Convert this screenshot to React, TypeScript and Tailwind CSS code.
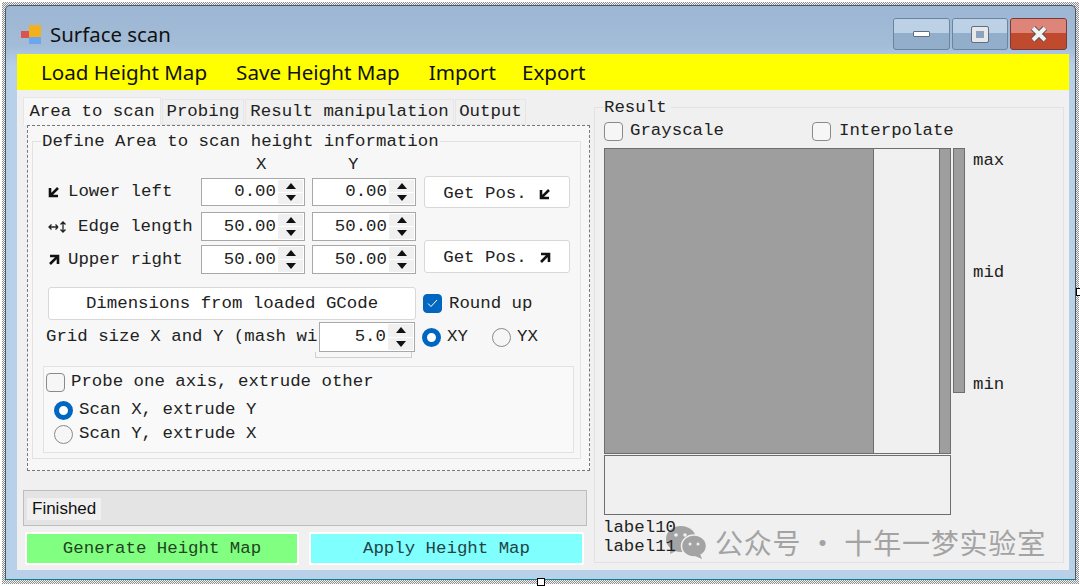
import React from 'react';

const mono = "font-['Liberation_Mono','Noto_Sans_CJK_SC',monospace] text-[17.4px] leading-5 text-[#222] whitespace-nowrap";

const Arrow = ({ dir }: { dir: 'll' | 'ur' }) => (
  <svg width="12" height="12" viewBox="0 0 12 12" className={dir === 'ur' ? 'rotate-180' : ''}>
    <path d="M2 2v8h8M2.8 9.2L10 2" fill="none" stroke="#111" strokeWidth="2.6" />
  </svg>
);

const Spinner = ({ value, height = 'h-7' }: { value: string; height?: string }) => (
  <div className={`flex w-[104px] ${height} items-center border border-[#a8a8a8] bg-white`}>
    <span className={`${mono} flex-1 pr-[2px] text-right`}>{value}</span>
    <div className="mr-px flex h-full w-[25px] flex-col gap-px bg-white py-px">
      <div className="flex flex-1 items-center justify-center bg-[#f0f0f0]">
        <div className="h-0 w-0 border-x-[5px] border-b-[6px] border-x-transparent border-b-[#111]" />
      </div>
      <div className="flex flex-1 items-center justify-center bg-[#f0f0f0]">
        <div className="h-0 w-0 border-x-[5px] border-t-[6px] border-x-transparent border-t-[#111]" />
      </div>
    </div>
  </div>
);

const Check = ({ checked = false, className = '' }: { checked?: boolean; className?: string }) => (
  <div className={`flex h-[19px] w-[19px] shrink-0 items-center justify-center rounded-[4px] border ${checked ? 'border-[#0067c0] bg-[#0067c0]' : 'border-[#8a8a8a] bg-[#f6f6f6]'} ${className}`}>
    {checked && (
      <svg width="11" height="9" viewBox="0 0 11 9">
        <path d="M1 4.5L4 7.5L10 1" fill="none" stroke="#fff" strokeWidth="1" />
      </svg>
    )}
  </div>
);

const Radio = ({ checked = false }: { checked?: boolean }) =>
  checked ? (
    <div className="h-[19px] w-[19px] shrink-0 rounded-full border-[5px] border-[#0067c0] bg-white" />
  ) : (
    <div className="h-[19px] w-[19px] shrink-0 rounded-full border border-[#8a8a8a] bg-[#f6f6f6]" />
  );

const CoordRow = ({ icon, label, labelGap, height, x, y, className = '' }: { icon: React.ReactNode; label: string; labelGap: string; height: string; x: string; y: string; className?: string }) => (
  <div className={`flex items-center ${className}`}>
    <div className={`flex w-[168px] items-center ${labelGap} pl-[15px]`}>
      {icon}
      <span className={mono}>{label}</span>
    </div>
    <div className="flex gap-[7px]">
      <Spinner value={x} height={height} />
      <Spinner value={y} height={height} />
    </div>
  </div>
);

const GetPos = ({ dir, height }: { dir: 'll' | 'ur'; height: string }) => (
  <button className={`flex w-[146px] ${height} items-center justify-center gap-3 rounded-[3px] border border-[#d8d8d8] bg-white pt-[3px] ${mono}`}>
    Get Pos. <Arrow dir={dir} />
  </button>
);

const WinButton = ({ children, red = false, width = 'w-[57px]' }: { children: React.ReactNode; red?: boolean; width?: string }) => (
  <div className={`relative flex h-[32px] ${width} items-center justify-center overflow-hidden rounded-[3px] border ${red ? 'border-[#7a3a38] bg-[#bf4a2e]' : 'border-[#6d84a0] bg-[#93aecb]'}`}>
    <div className={`absolute inset-x-0 top-0 h-[14px] ${red ? 'bg-[#dd8579]' : 'bg-[#bcd0e6]'}`} />
    <div className="relative">{children}</div>
  </div>
);

export default function App() {
  return (
    <div className="relative h-[586px] w-[1080px] overflow-hidden bg-white pl-[2px] pr-[1px] pt-[2px] pb-[2px]">
      {/* designer hatch around the form */}
      <div className="h-full w-full bg-[repeating-conic-gradient(#8f8f8f_0_25%,#f4f4f4_0_50%)] bg-[length:2px_2px] pb-[4px] pl-[3px] pr-[3px] pt-[3px]">
        <div className="flex h-full w-full flex-col rounded-t-[5px] border border-[#4a5a60] border-b-[#0f7f8f] bg-[linear-gradient(#9cb6d3,#a3bcd8_40px,#b9d0e9_60px)] pb-[9px] pl-[11px] pr-[6px]">
          {/* title bar */}
          <div className="flex h-[48px] shrink-0 items-start justify-between">
            <div className="flex items-center gap-[8px] pl-[4px] pt-[16px]">
              <svg width="21" height="21" viewBox="0 0 21 21">
                <rect x="0" y="7" width="8" height="7" fill="#d9534f" />
                <rect x="8" y="1" width="12" height="12" fill="#f2b01e" />
                <rect x="8" y="13" width="12" height="7" fill="#6ea6ee" />
              </svg>
              <span className="font-['Noto_Sans',sans-serif] text-[20.4px] leading-6 text-[#111]">Surface scan</span>
            </div>
            <div className="flex gap-[2px] pt-[12px] pr-[2px]">
              <WinButton>
                <div className="h-[6px] w-[17px] rounded-[1px] border border-[#5f6f82] bg-white" />
              </WinButton>
              <WinButton width="w-[56px]">
                <div className="h-[15px] w-[16px] rounded-[1px] border-[4px] border-[#e8e8e8] bg-[#8aa4c0] outline outline-1 outline-[#5f6f82]" />
              </WinButton>
              <WinButton red>
                <svg width="20" height="18" viewBox="0 0 20 18">
                  <path d="M4 3L16 15M16 3L4 15" stroke="#5a4a4a" strokeWidth="6" />
                  <path d="M4 3L16 15M16 3L4 15" stroke="#f2f2f2" strokeWidth="4" />
                </svg>
              </WinButton>
            </div>
          </div>

          {/* client area */}
          <div className="flex min-h-0 flex-1 flex-col bg-[#f0f0f0]">
            <div className="flex h-9 shrink-0 items-center gap-[29px] bg-[#ffff00] pl-6 font-['Noto_Sans',sans-serif] text-[20.6px] text-[#111]">
              <span>Load Height Map</span>
              <span>Save Height Map</span>
              <span>Import</span>
              <span className="-ml-[3px]">Export</span>
            </div>

            <div className="flex flex-1 gap-[4px] pl-[6px]">
              {/* left side */}
              <div className="flex w-[567px] shrink-0 flex-col pt-[7px]">
                <div className="flex h-[28px] items-end gap-px">
                  <div className={`${mono} flex h-[28px] w-[138px] items-center justify-center border border-b-0 border-[#e6e6e6] bg-[#f7f7f7]`}>Area to scan</div>
                  <div className={`${mono} flex h-[26px] w-[82px] items-center justify-center border border-[#e6e6e6]`}>Probing</div>
                  <div className={`${mono} flex h-[26px] w-[209px] items-center justify-center border border-[#e6e6e6]`}>Result manipulation</div>
                  <div className={`${mono} flex h-[26px] w-[71px] items-center justify-center border border-[#e6e6e6]`}>Output</div>
                </div>

                <div className="ml-[4px] h-[346px] border border-dashed border-[#777] bg-[#f7f7f7] pl-[4px] pr-[8px] pt-[15px]">
                  <div className="relative h-[318px] border border-[#e2e2e2]">
                    <span className={`${mono} absolute -top-[10px] left-[8px] bg-[#f7f7f7] px-[1px]`}>Define Area to scan height information</span>

                    <div className="flex pt-[13px]">
                      <div className="flex w-[384px] flex-col gap-[6px]">
                        <div className={`${mono} -mb-[3px] flex h-[20px] pl-[223px]`}>
                          <span className="w-[92px]">X</span>
                          <span>Y</span>
                        </div>
                        <CoordRow icon={<Arrow dir="ll" />} label="Lower left" labelGap="gap-[8px]" height="h-7" x="0.00" y="0.00" />
                        <CoordRow
                          icon={
                            <svg width="20" height="12" viewBox="0 0 20 12">
                              <path d="M1 6h9M3.5 3.5L1 6l2.5 2.5M10 6L7.5 3.5M10 6L7.5 8.5M15 1v10M12.5 3.5L15 1l2.5 2.5M12.5 8.5L15 11l2.5-2.5" fill="none" stroke="#222" strokeWidth="1.3" />
                            </svg>
                          }
                          label="Edge length"
                          labelGap="gap-[10px]"
                          height="h-[29px]"
                          x="50.00"
                          y="50.00"
                        />
                        <CoordRow icon={<Arrow dir="ur" />} label="Upper right" labelGap="gap-[8px]" height="h-[29px]" x="50.00" y="50.00" className="-mt-[2px]" />
                      </div>
                      <div className="ml-[7px] flex flex-col gap-[32px] pt-[21px]">
                        <GetPos dir="ll" height="h-8" />
                        <GetPos dir="ur" height="h-[33px]" />
                      </div>
                    </div>

                    <div className="flex items-center pl-[15px] pt-[13px]">
                      <button className={`h-[33px] w-[368px] rounded-[3px] border border-[#d8d8d8] bg-white ${mono}`}>Dimensions from loaded GCode</button>
                      <Check checked className="ml-[7px]" />
                      <span className={`${mono} ml-[7px]`}>Round up</span>
                    </div>

                    <div className="relative mt-[2px] flex h-[30px] items-center pl-[13px]">
                      <span className={mono}>Grid size X and Y (mash wi</span>
                      <div className="absolute left-[282px] top-[30px] h-[6px] w-[97px] border border-t-0 border-[#cfcfcf]" />
                      <div className="absolute left-[286px] top-0">
                        <Spinner value="5.0" height="h-[30px] !w-[96px]" />
                      </div>
                      <div className="absolute left-[389px] top-[5px] flex items-center gap-[6px]">
                        <Radio checked />
                        <span className={mono}>XY</span>
                      </div>
                      <div className="absolute left-[459px] top-[5px] flex items-center gap-[6px]">
                        <Radio />
                        <span className={mono}>YX</span>
                      </div>
                    </div>

                    <div className="ml-[10px] mt-[14px] h-[87px] w-[531px] border border-[#e2e2e2] bg-[#f9f9f9] pl-[2px] pt-[5px]">
                      <div className="flex items-center gap-[6px]">
                        <Check />
                        <span className={mono}>Probe one axis, extrude other</span>
                      </div>
                      <div className="flex items-center gap-[6px] pl-[8px] pt-[8px]">
                        <Radio checked />
                        <span className={mono}>Scan X, extrude Y</span>
                      </div>
                      <div className="flex items-center gap-[6px] pl-[8px] pt-[4px]">
                        <Radio />
                        <span className={mono}>Scan Y, extrude X</span>
                      </div>
                    </div>
                  </div>
                </div>

                <div className="mt-[19px] flex h-[36px] w-[564px] items-center border border-[#bdbdbd] bg-[#e4e4e4] pl-[3px]">
                  <span className="mt-[2px] bg-[#f0f0f0] px-[5px] py-[1px] font-['Liberation_Sans',sans-serif] text-[17px] leading-[20px] text-[#111]">Finished</span>
                </div>

                <div className="mt-[6px] flex gap-[10px] pl-[2px]">
                  <button className={`h-[33px] w-[274px] rounded-[2px] border-2 border-white bg-[#80ff80] ${mono} !text-[#224422]`}>Generate Height Map</button>
                  <button className={`h-[33px] w-[275px] rounded-[2px] border-2 border-white bg-[#80ffff] ${mono} !text-[#224444]`}>Apply Height Map</button>
                </div>
              </div>

              {/* result side */}
              <div className="relative mb-[7px] mt-[17px] w-[470px] border border-[#e2e2e2] pl-[9px]">
                <span className={`${mono} absolute -top-[10px] left-[9px] bg-[#f0f0f0] pr-[4px]`}>Result</span>
                <div className="flex h-[40px] items-center pt-[6px]">
                  <div className="flex w-[208px] items-center gap-[7px]">
                    <Check />
                    <span className={mono}>Grayscale</span>
                  </div>
                  <div className="flex items-center gap-[8px]">
                    <Check />
                    <span className={mono}>Interpolate</span>
                  </div>
                </div>

                <div className="flex">
                  <div className="flex h-[306px] w-[347px] border border-[#6e6e6e]">
                    <div className="w-[268px] bg-[#9e9e9e]" />
                    <div className="w-[67px] border-x border-[#6e6e6e] bg-[#f0f0f0]" />
                    <div className="flex-1 bg-[#9e9e9e]" />
                  </div>
                  <div className="ml-[2px] h-[245px] w-[12px] border border-[#6e6e6e] bg-[#9e9e9e]" />
                  <div className={`${mono} ml-[8px] flex h-[247px] flex-col justify-between pt-[3px]`}>
                    <span>max</span>
                    <span>mid</span>
                    <span>min</span>
                  </div>
                </div>

                <div className="mt-px h-[60px] w-[347px] border border-[#6e6e6e]" />
                <div className={`${mono} relative z-10 -ml-px pt-[3px] leading-[19px]`}>
                  <div>label10</div>
                  <div>label11</div>
                </div>

                {/* watermark */}
                <div className="absolute left-[70px] top-[417px] flex items-center gap-[8px] text-[#a3a3a3]">
                  <svg width="42" height="34" viewBox="0 0 42 34">
                    <ellipse cx="16" cy="14" rx="15" ry="13" fill="#a3a3a3" />
                    <path d="M6 22L5 29L13 25Z" fill="#a3a3a3" />
                    <ellipse cx="29" cy="21" rx="12.5" ry="11" fill="#a3a3a3" stroke="#f0f0f0" strokeWidth="1.5" />
                    <path d="M35 29L37 34L30 31Z" fill="#a3a3a3" />
                    <circle cx="11" cy="10" r="1.8" fill="#f0f0f0" />
                    <circle cx="20" cy="10" r="1.8" fill="#f0f0f0" />
                    <circle cx="25" cy="19" r="1.5" fill="#f0f0f0" />
                    <circle cx="33" cy="19" r="1.5" fill="#f0f0f0" />
                  </svg>
                  <span className="font-['Noto_Sans_CJK_SC',sans-serif] text-[28px] leading-8 tracking-[0.8px] whitespace-nowrap">公众号 · 十年一梦实验室</span>
                </div>
              </div>
            </div>
          </div>
        </div>
      </div>
      {/* resize handles */}
      <div className="absolute left-[537px] top-[578px] h-2 w-2 border border-black bg-white" />
      <div className="absolute left-[1076px] top-[288px] h-2 w-2 border border-black bg-white" />
    </div>
  );
}
